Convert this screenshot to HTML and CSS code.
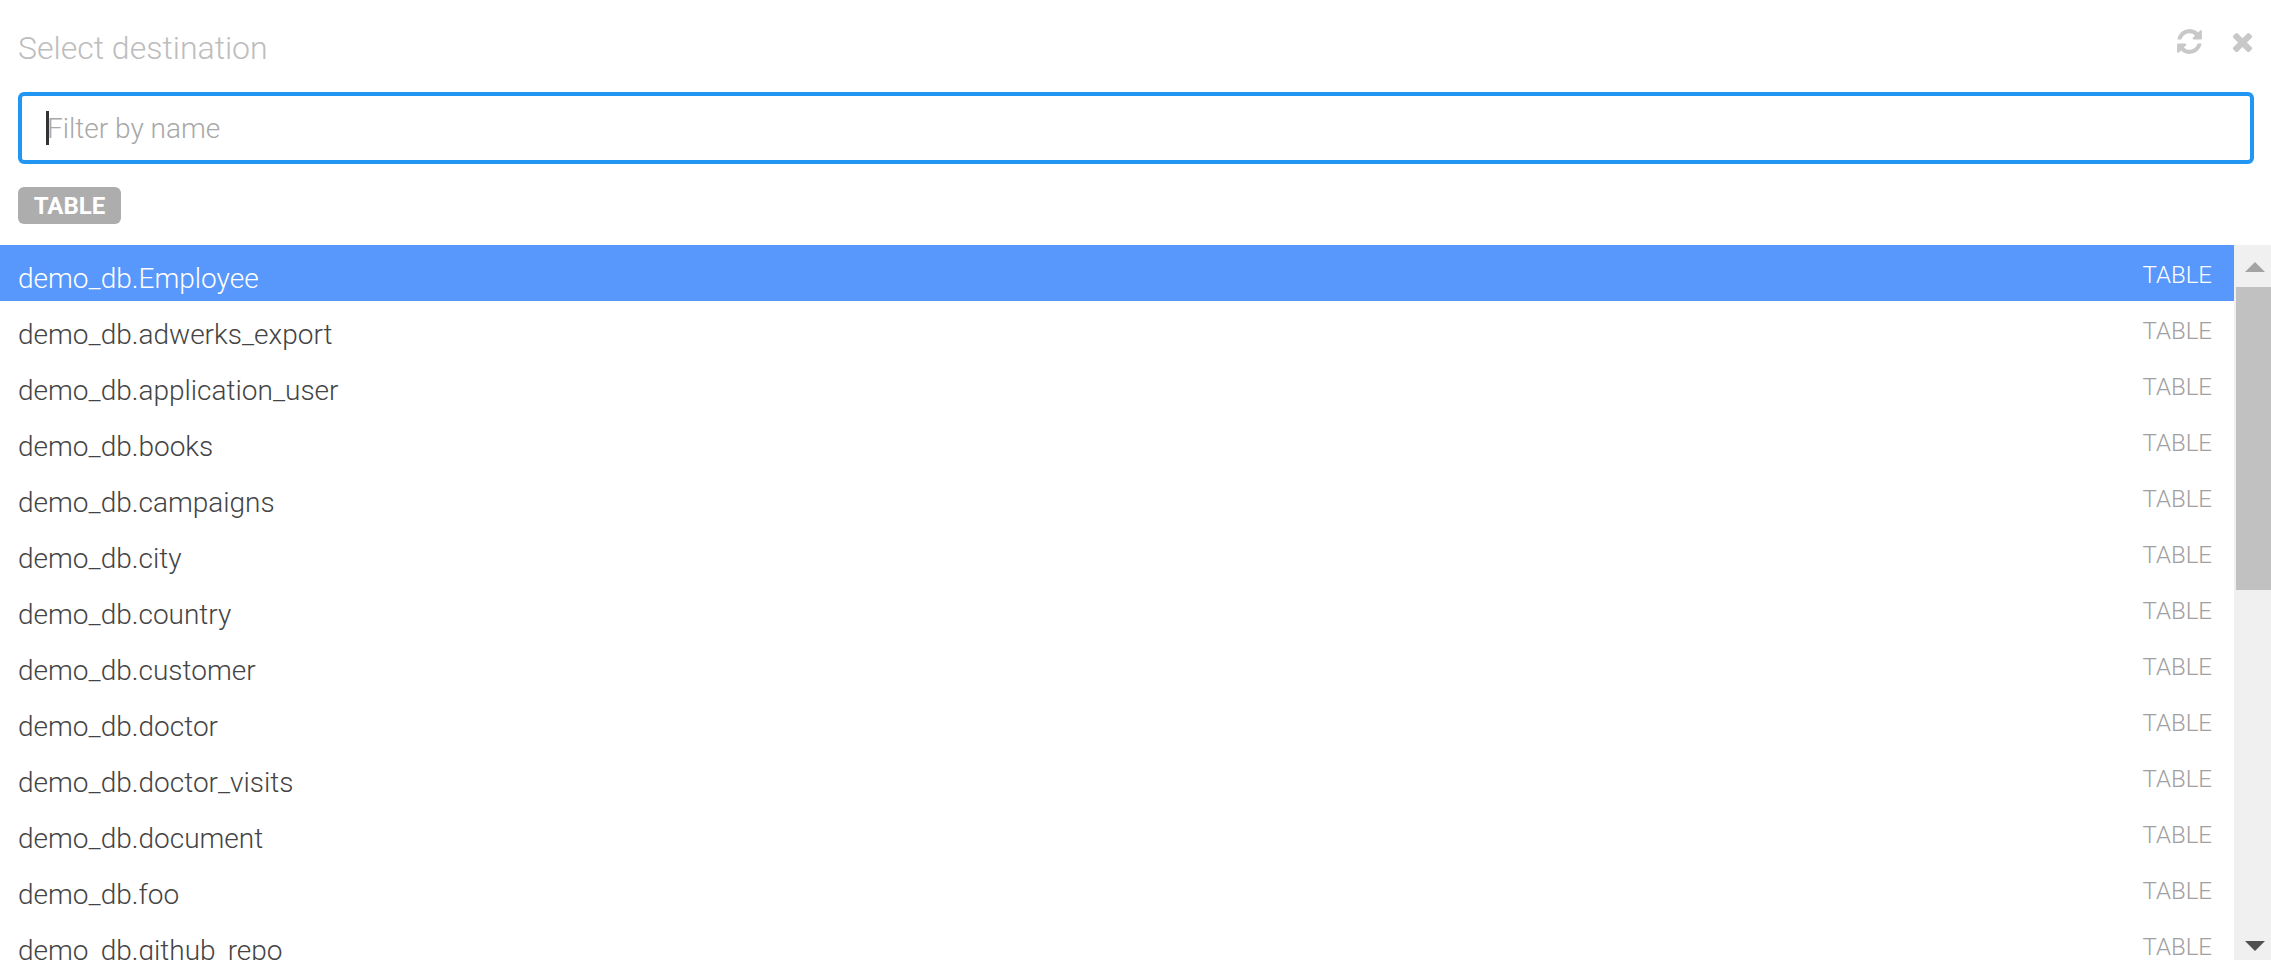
FILE: index.html
```html
<!DOCTYPE html>
<html lang="en">
<head>
<meta charset="utf-8">
<title>Select destination</title>
<link rel="stylesheet" href="styles.css">
</head>
<body>
<header class="head">
  <h1 class="title">Select destination</h1>
  <div class="actions">
    <svg class="icon" viewBox="0 0 1792 1792"><path d="M1639 1056q0 5-1 7-64 268-268 434.5t-478 166.5q-146 0-282.5-55t-243.5-157l-129 129q-19 19-45 19t-45-19-19-45v-448q0-26 19-45t45-19h448q26 0 45 19t19 45-19 45l-137 137q71 66 161 102t187 36q134 0 250-65t186-179q11-17 53-117 8-23 30-23h192q13 0 22.5 9.5t9.5 22.5zm25-800v448q0 26-19 45t-45 19h-448q-26 0-45-19t-19-45 19-45l138-138q-148-137-349-137-134 0-250 65t-186 179q-11 17-53 117-8 23-30 23h-199q-13 0-22.5-9.5t-9.5-22.5v-7q65-268 270-434.5t480-166.5q146 0 284 55.5t245 156.5l130-129q19-19 45-19t45 19 19 45z"/></svg>
    <svg class="icon" viewBox="0 0 1792 1792"><path d="M1490 1322q0 40-28 68l-136 136q-28 28-68 28t-68-28l-294-294-294 294q-28 28-68 28t-68-28l-136-136q-28-28-28-68t28-68l294-294-294-294q-28-28-28-68t28-68l136-136q28-28 68-28t68 28l294 294 294-294q28-28 68-28t68 28l136 136q28 28 28 68t-28 68l-294 294 294 294q28 28 28 68z"/></svg>
  </div>
</header>
<div class="filter">
  <input class="filter-input" type="text" placeholder="Filter by name">
  <span class="caret"></span>
</div>
<div class="tags"><span class="tag">TABLE</span></div>
<div class="results">
  <ul class="list">
    <li class="row row-active"><span class="name">demo_db.Employee</span><span class="type">TABLE</span></li>
    <li class="row"><span class="name">demo_db.adwerks_export</span><span class="type">TABLE</span></li>
    <li class="row"><span class="name">demo_db.application_user</span><span class="type">TABLE</span></li>
    <li class="row"><span class="name">demo_db.books</span><span class="type">TABLE</span></li>
    <li class="row"><span class="name">demo_db.campaigns</span><span class="type">TABLE</span></li>
    <li class="row"><span class="name">demo_db.city</span><span class="type">TABLE</span></li>
    <li class="row"><span class="name">demo_db.country</span><span class="type">TABLE</span></li>
    <li class="row"><span class="name">demo_db.customer</span><span class="type">TABLE</span></li>
    <li class="row"><span class="name">demo_db.doctor</span><span class="type">TABLE</span></li>
    <li class="row"><span class="name">demo_db.doctor_visits</span><span class="type">TABLE</span></li>
    <li class="row"><span class="name">demo_db.document</span><span class="type">TABLE</span></li>
    <li class="row"><span class="name">demo_db.foo</span><span class="type">TABLE</span></li>
    <li class="row"><span class="name">demo_db.github_repo</span><span class="type">TABLE</span></li>
  </ul>
  <div class="scrollbar">
    <div class="arrow-box"><span class="arrow-up"></span></div>
    <div class="thumb"></div>
    <div class="track"></div>
    <div class="arrow-box arrow-box-end"><span class="arrow-down"></span></div>
  </div>
</div>
</body>
</html>
```
FILE: styles.css
```css
* { box-sizing: border-box; }
html, body { height: 100%; margin: 0; }
body {
  display: flex;
  flex-direction: column;
  overflow: hidden;
  background: #fff;
  font-family: Roboto, "Liberation Sans", sans-serif;
  font-weight: 300;
}
.head {
  display: flex;
  justify-content: space-between;
  align-items: flex-start;
  height: 92px;
  padding: 27px 14px 0 18px;
}
.title {
  margin: 0;
  font-size: 32px;
  line-height: 42px;
  font-weight: 300;
  color: #bdbdbd;
}
.actions {
  display: flex;
  gap: 24px;
}
.icon { width: 29px; height: 29px; fill: #c8c8c8; display: block; }
.filter {
  position: relative;
  margin: 0 17px 0 18px;
}
.filter-input {
  display: block;
  width: 100%;
  height: 72px;
  padding: 0 0 0 25px;
  border: 4px solid #2196f3;
  border-radius: 6px;
  outline: none;
  font: 300 28px Roboto, "Liberation Sans", sans-serif;
  color: #333;
  background: #fff;
}
.filter-input::placeholder { color: #a8a8a8; opacity: 1; }
.caret {
  position: absolute;
  left: 28px;
  top: 19px;
  width: 3px;
  height: 34px;
  background: #333;
}
.tags {
  height: 81px;
  padding: 23px 0 0 18px;
}
.tag {
  display: inline-block;
  width: 103px;
  height: 37px;
  border-radius: 6px;
  background: #adadad;
  color: #fff;
  font-size: 24px;
  font-weight: 700;
  line-height: 38px;
  text-align: center;
}
.results {
  display: flex;
  flex: 1;
  min-height: 0;
}
.list {
  flex: 1;
  min-width: 0;
  margin: 0;
  padding: 0;
  list-style: none;
  overflow: hidden;
}
.row {
  display: flex;
  justify-content: space-between;
  height: 56px;
  padding: 0 22px 0 18px;
  color: #444;
}
.row-active { background: #5897fb; color: #fff; }
.name { font-size: 28px; line-height: 68px; height: 56px; }
.type { font-size: 24px; line-height: 60px; height: 56px; color: #a0a0a0; }
.row-active .type { color: #fff; }
.scrollbar {
  display: flex;
  flex-direction: column;
  width: 37px;
  background: #f0f0f0;
}
.arrow-box {
  display: flex;
  justify-content: center;
  flex: 0 0 42px;
  padding: 17px 0 0 4px;
}
.arrow-box-end { padding-top: 23px; }
.arrow-up {
  width: 0;
  height: 0;
  border-left: 10px solid transparent;
  border-right: 10px solid transparent;
  border-bottom: 10px solid #a3a3a3;
}
.arrow-down {
  width: 0;
  height: 0;
  border-left: 10px solid transparent;
  border-right: 10px solid transparent;
  border-top: 10px solid #505050;
}
.thumb {
  flex: 0 0 303px;
  margin-left: 2px;
  background: #c1c1c1;
}
.track { flex: 1; }
```
